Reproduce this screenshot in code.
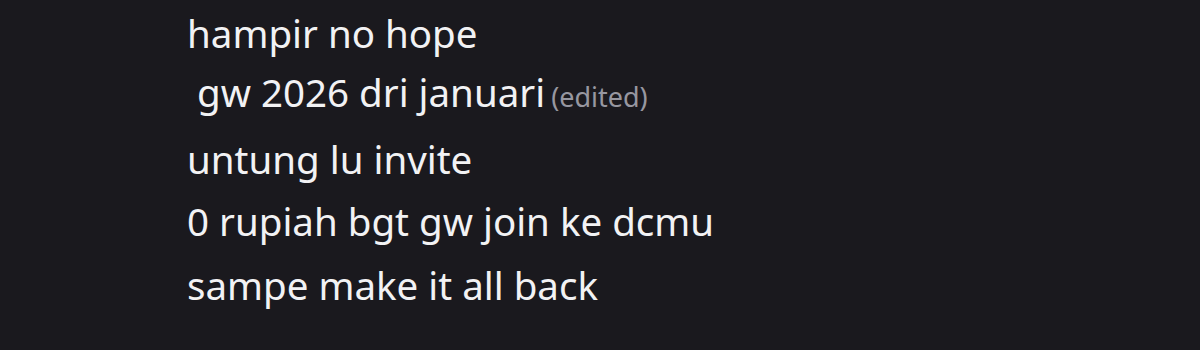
export default function App() {
  return (
    <div className="h-[350px] w-[1200px] bg-[#1a191e] pl-[187px] pt-[5px] text-[#f2f2f4] font-['Noto_Sans',sans-serif] text-[38.5px] leading-[56px] overflow-hidden">
      <div>hampir no hope</div>
      <div className="mt-[3px] whitespace-pre">
        {' gw 2026 dri januari'}
        <span className="ml-[6px] text-[27px] text-[#9797a0]">(edited)</span>
      </div>
      <div className="mt-[6px]">untung lu invite</div>
      <div className="mt-[6px]">0 rupiah bgt gw join ke dcmu</div>
      <div className="mt-[8px]">sampe make it all back</div>
    </div>
  );
}
